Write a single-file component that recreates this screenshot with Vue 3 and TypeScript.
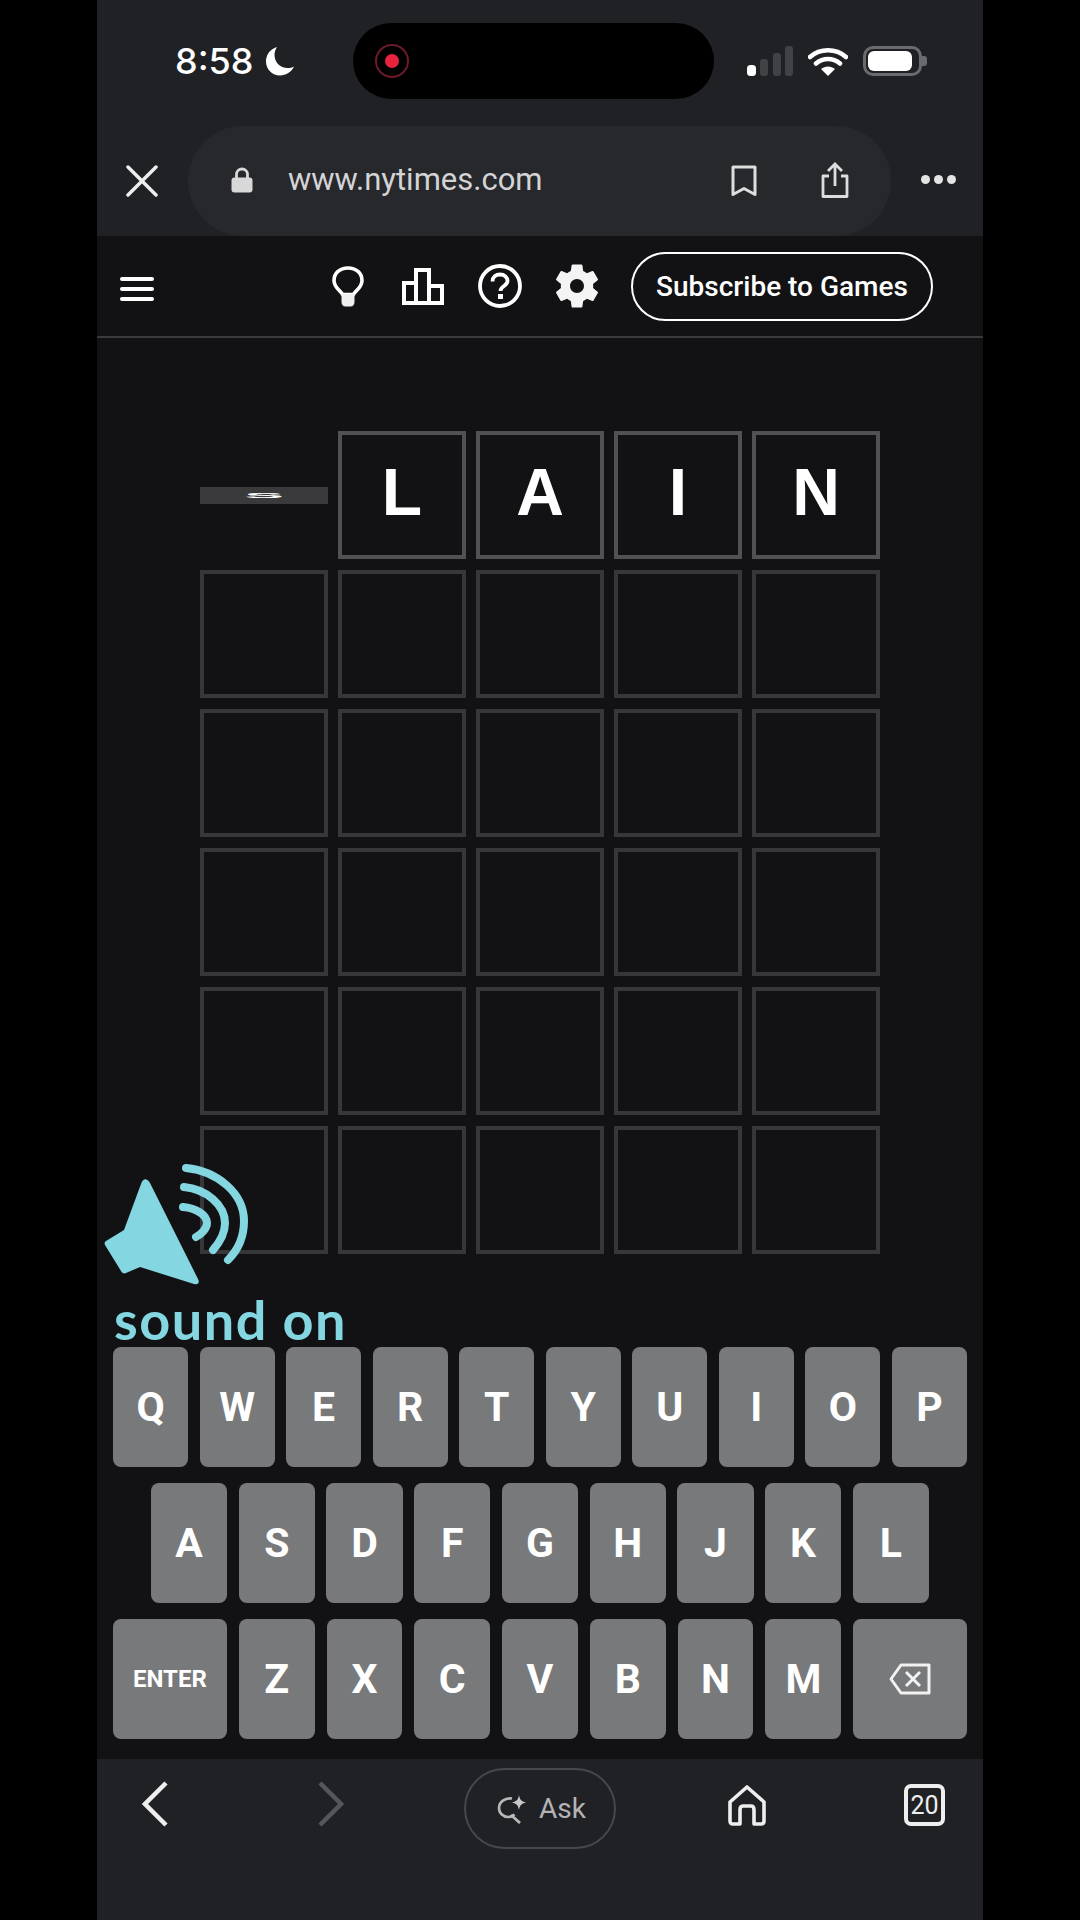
<script setup lang="ts">
const tiles: string[] = ['', 'L', 'A', 'I', 'N']
const emptyRows: number[] = [1, 2, 3, 4, 5]

const keyRows: string[][] = [
  ['Q', 'W', 'E', 'R', 'T', 'Y', 'U', 'I', 'O', 'P'],
  ['A', 'S', 'D', 'F', 'G', 'H', 'J', 'K', 'L'],
  ['ENTER', 'Z', 'X', 'C', 'V', 'B', 'N', 'M', 'BACK'],
]

function keyClass(key: string): string {
  if (key === 'ENTER') return 'key wide enter'
  if (key === 'BACK') return 'key wide'
  return 'key'
}
</script>

<template>
  <div class="page">
    <div class="phone">
      <div class="chrome">
        <div class="status">
          <span class="time">8:58</span>
          <svg class="moon" viewBox="0 0 30 30" width="30" height="30">
            <path d="M12 1C5 3 1 9 1 15.500C1 23.500 7.500 29.500 15 29.500C21 29.500 26.500 26 29 20.500C27 21.500 25 22 22.500 22C15 22 9.500 16 9.500 9C9.500 6 10.500 3.500 12 1Z" fill="#fff" />
          </svg>
          <div class="island">
            <div class="rec"><div class="rec-dot"></div></div>
          </div>
          <svg class="signal" viewBox="0 0 46 30" width="46" height="30">
            <rect x="0" y="19" width="9" height="11" rx="3.500" fill="#fff" />
            <rect x="13" y="13" width="8" height="17" rx="3" fill="#414245" />
            <rect x="26" y="7" width="8" height="23" rx="3" fill="#414245" />
            <rect x="38" y="0" width="8" height="30" rx="3" fill="#414245" />
          </svg>
          <svg class="wifi" viewBox="0 0 40 30" width="40" height="30">
            <path d="M2 11C12 2 28 2 38 11M8 17.500C15 11.500 25 11.500 32 17.500" fill="none" stroke="#fff" stroke-width="4.500" stroke-linecap="round" />
            <path d="M13 23C17 19.500 23 19.500 27 23L20 30Z" fill="#fff" />
          </svg>
          <div class="battery">
            <div class="battery-body"><div class="battery-fill"></div></div>
            <div class="battery-nub"></div>
          </div>
        </div>
        <div class="url-row">
          <svg class="close" viewBox="0 0 32 32" width="32" height="32">
            <path d="M2 2L30 30M30 2L2 30" stroke="#eee" stroke-width="3.500" stroke-linecap="round" />
          </svg>
          <div class="url-bar">
            <svg class="lock" viewBox="0 0 22 26" width="22" height="26">
              <path d="M5.500 12V7.500C5.500 4 8 2 11 2C14 2 16.500 4 16.500 7.500V12" fill="none" stroke="#d8d8d8" stroke-width="2.800" />
              <rect x="0.500" y="10.500" width="21" height="15" rx="3" fill="#d8d8d8" />
            </svg>
            <span class="url">www.nytimes.com</span>
            <svg class="bookmark" viewBox="0 0 26 32" width="26" height="32">
              <path d="M2 2H24V29.500L13 23.500L2 29.500Z" fill="none" stroke="#ddd" stroke-width="3" stroke-linejoin="round" />
            </svg>
            <svg class="share" viewBox="0 0 28 36" width="28" height="36">
              <path d="M8 14H2V34.500H26V14H20" fill="none" stroke="#ddd" stroke-width="2.800" stroke-linejoin="round" />
              <path d="M14 24V3M7 9L14 2L21 9" fill="none" stroke="#ddd" stroke-width="2.800" />
            </svg>
          </div>
          <div class="dots"><i></i><i></i><i></i></div>
        </div>
      </div>

      <header class="game-head">
        <div class="burger"><i></i><i></i><i></i></div>
        <svg class="bulb" viewBox="0 0 32 41" width="32" height="41">
          <path d="M10.500 28.500C8 24 2 21.500 2 14.500C2 7 8 2 16 2C24 2 30 7 30 14.500C30 21.500 24 24 21.500 28.500Z" fill="none" stroke="#fff" stroke-width="3.600" stroke-linejoin="round" />
          <path d="M9.500 28H22.500V36C22.500 38.500 21 40.500 18.500 40.500H13.500C11 40.500 9.500 38.500 9.500 36Z" fill="#eee" />
        </svg>
        <svg class="stats" viewBox="0 0 42 37" width="42" height="37">
          <path d="M2 15H14V35H2ZM14 2H27V35H14ZM27 18H40V35H27Z" fill="none" stroke="#fff" stroke-width="4" />
        </svg>
        <svg class="help" viewBox="0 0 44 44" width="44" height="44">
          <circle cx="22" cy="22" r="20" fill="none" stroke="#fff" stroke-width="3.800" />
          <path d="M14.500 17.500C14.500 13 18 10.500 22 10.500C26.500 10.500 29.500 13.500 29.500 17C29.500 22 22.500 22 22.500 27" fill="none" stroke="#fff" stroke-width="3.800" />
          <rect x="20" y="30" width="5" height="5" fill="#fff" />
        </svg>
        <svg class="gear" viewBox="0 0 24 24" width="54" height="54">
          <path d="M19.140 12.940c.04-.3.060-.61.060-.94 0-.32-.020-.64-.070-.94l2.030-1.580c.18-.14.230-.41.120-.61l-1.920-3.320c-.12-.22-.37-.29-.59-.22l-2.390.96c-.5-.38-1.030-.7-1.620-.94l-.36-2.540c-.04-.24-.24-.41-.48-.41h-3.840c-.24 0-.43.170-.47.410l-.36 2.540c-.59.240-1.130.57-1.620.94l-2.390-.96c-.22-.08-.47 0-.59.220L2.740 8.870c-.12.210-.08.470.12.610l2.030 1.580c-.05.3-.09.630-.09.940s.020.640.070.940l-2.030 1.580c-.18.140-.23.410-.12.610l1.920 3.320c.12.220.37.290.59.220l2.390-.96c.5.380 1.030.7 1.620.94l.36 2.540c.05.240.24.410.48.410h3.840c.24 0 .44-.170.47-.41l.36-2.540c.59-.240 1.130-.56 1.620-.94l2.390.96c.22.080.47 0 .59-.220l1.920-3.320c.12-.22.070-.47-.12-.61l-2.010-1.580zM12 15.100c-1.700 0-3.100-1.400-3.100-3.100s1.400-3.100 3.100-3.100 3.100 1.400 3.100 3.100-1.400 3.100-3.100 3.100z" fill="#f4f4f4" />
        </svg>
        <div class="subscribe">Subscribe to Games</div>
      </header>

      <main class="board">
        <div class="tile-row">
          <div v-for="(letter, i) in tiles" :key="i" class="cell">
            <div v-if="i === 0" class="tile-flip"><span class="flip-letter">S</span></div>
            <div v-else class="tile filled">{{ letter }}</div>
          </div>
        </div>
        <div v-for="row in emptyRows" :key="row" class="tile-row">
          <div v-for="col in 5" :key="col" class="cell">
            <div class="tile"></div>
          </div>
        </div>
      </main>

      <section class="keyboard">
        <div v-for="(row, r) in keyRows" :key="r" class="key-row" :class="'row-' + r">
          <div v-for="key in row" :key="key" :class="keyClass(key)">
            <svg v-if="key === 'BACK'" viewBox="0 0 42 32" width="42" height="32">
              <path d="M12 2H40V30H12L2 16Z" fill="none" stroke="#f2f2f2" stroke-width="3" stroke-linejoin="round" />
              <path d="M17 9L31 23M31 9L17 23" stroke="#f2f2f2" stroke-width="3" />
            </svg>
            <template v-else>{{ key }}</template>
          </div>
        </div>
      </section>

      <nav class="toolbar">
        <svg class="nav-back" viewBox="0 0 26 46" width="26" height="46">
          <path d="M24 2L3 23L24 44" fill="none" stroke="#eee" stroke-width="4.500" />
        </svg>
        <svg class="nav-fwd" viewBox="0 0 26 46" width="26" height="46">
          <path d="M2 2L23 23L2 44" fill="none" stroke="#55565a" stroke-width="4.500" />
        </svg>
        <div class="ask">
          <svg viewBox="0 0 30 30" width="30" height="30">
            <path d="M15 4.500C8 3.500 2 8 2 14C2 19.500 6.500 23 11 23C14 23 16 22 17.500 20.500" fill="none" stroke="#b8b8b8" stroke-width="2.600" />
            <path d="M14 21L23 29" stroke="#b8b8b8" stroke-width="2.800" />
            <path d="M22 1C23 6 24 7 29 8.500C24 10 23 11 22 16C21 11 20 10 15 8.500C20 7 21 6 22 1Z" fill="#c8c8c8" />
          </svg>
          <span>Ask</span>
        </div>
        <svg class="home" viewBox="0 0 38 41" width="38" height="41">
          <path d="M2 17L19 2L36 17V36C36 38 35 39 33 39H26V25C26 22 25 21 23 21H15C13 21 12 22 12 25V39H5C3 39 2 38 2 36Z" fill="none" stroke="#eee" stroke-width="3.600" stroke-linejoin="round" />
        </svg>
        <div class="tabs">20</div>
      </nav>

      <div class="sticker">
        <svg viewBox="0 0 150 122" width="150" height="122">
          <path d="M2 78L20 67L37 21C39 15 43 15 46 20L94 116C96 120 94 122 90 121L36 104L22 110C20 111 18 110 17 108L1 82C0 80 1 79 2 78Z" fill="#84d6e0" />
          <path d="M82 5C113 8 140 30 140 58C140 73 134 87 124 97" fill="none" stroke="#84d6e0" stroke-width="8" stroke-linecap="round" />
          <path d="M80 24C102 26 121 42 121 60C121 70 116 79 109 87" fill="none" stroke="#84d6e0" stroke-width="8" stroke-linecap="round" />
          <path d="M79 44C92 45 103 52 103 60C103 65 98 71 92 74" fill="none" stroke="#84d6e0" stroke-width="8" stroke-linecap="round" />
        </svg>
        <span class="sound-text">sound on</span>
      </div>
    </div>
  </div>
</template>

<style>
html,
body {
  margin: 0;
  background: #000;
}
</style>

<style scoped>
.page {
  width: 1080px;
  height: 1920px;
  background: #000;
  display: flex;
  justify-content: center;
  font-family: "Liberation Sans", Arial, sans-serif;
  overflow: hidden;
}
.phone {
  position: relative;
  width: 886px;
  height: 1920px;
  background: #121214;
  display: flex;
  flex-direction: column;
}

/* browser chrome */
.chrome {
  height: 236px;
  background: #202125;
  flex: none;
}
.status {
  height: 122px;
  padding-left: 78px;
  display: flex;
  align-items: center;
  box-sizing: border-box;
}
.time {
  width: 88px;
  color: #fff;
  font: 500 36px Inter, sans-serif;
}
.moon {
  margin-left: 2px;
  flex: none;
}
.island {
  margin-left: 58px;
  width: 361px;
  height: 76px;
  border-radius: 38px;
  background: #000;
  display: flex;
  align-items: center;
  padding-left: 22px;
  box-sizing: border-box;
  flex: none;
}
.rec {
  width: 34px;
  height: 34px;
  border: 2px solid #6b1a28;
  border-radius: 50%;
  box-sizing: border-box;
  display: flex;
  align-items: center;
  justify-content: center;
}
.rec-dot {
  width: 14px;
  height: 14px;
  border-radius: 50%;
  background: #e8243f;
}
.signal {
  margin-left: 33px;
  flex: none;
}
.wifi {
  margin-left: 15px;
  flex: none;
}
.battery {
  margin-left: 15px;
  display: flex;
  align-items: center;
}
.battery-body {
  width: 59px;
  height: 30px;
  border: 3px solid #6a6b6f;
  border-radius: 10px;
  box-sizing: border-box;
  padding: 2px;
}
.battery-fill {
  width: 44px;
  height: 100%;
  background: #fff;
  border-radius: 6px;
}
.battery-nub {
  width: 5px;
  height: 10px;
  background: #6a6b6f;
  border-radius: 0 3px 3px 0;
}
.url-row {
  height: 114px;
  display: flex;
  align-items: flex-end;
  padding-left: 29px;
}
.close {
  margin-bottom: 39px;
  flex: none;
}
.url-bar {
  margin-left: 30px;
  width: 703px;
  height: 110px;
  border-radius: 55px;
  background: #27282c;
  display: flex;
  align-items: center;
  padding-left: 43px;
  box-sizing: border-box;
  flex: none;
}
.lock {
  margin-top: -2px;
  flex: none;
}
.url {
  margin-left: 35px;
  margin-top: -3px;
  width: 443px;
  color: #d4d4d6;
  font: 400 31px Roboto, sans-serif;
}
.bookmark {
  flex: none;
}
.share {
  margin-left: 64px;
  margin-top: -2px;
  flex: none;
}
.dots {
  margin-left: 30px;
  margin-bottom: 52px;
  display: flex;
  gap: 4px;
}
.dots i {
  width: 9px;
  height: 9px;
  border-radius: 50%;
  background: #e4e4e4;
}

/* game header */
.game-head {
  height: 102px;
  border-bottom: 2px solid #3a3a3c;
  box-sizing: border-box;
  display: flex;
  align-items: center;
  padding-left: 23px;
  flex: none;
}
.burger {
  width: 34px;
  margin-top: 6px;
  display: flex;
  flex-direction: column;
  gap: 6px;
}
.burger i {
  height: 4px;
  background: #fff;
  border-radius: 2px;
}
.bulb {
  margin-left: 178px;
  flex: none;
}
.stats {
  margin-left: 38px;
  flex: none;
}
.help {
  margin-left: 34px;
  flex: none;
}
.gear {
  margin-left: 28px;
  flex: none;
}
.subscribe {
  margin-left: 27px;
  width: 302px;
  height: 69px;
  border: 2px solid #fff;
  border-radius: 35px;
  box-sizing: border-box;
  color: #fff;
  font: 500 28px Roboto, sans-serif;
  display: flex;
  align-items: center;
  justify-content: center;
  flex: none;
}

/* board */
.board {
  padding: 93px 0 0 103px;
  display: flex;
  flex-direction: column;
  gap: 11px;
  flex: none;
}
.tile-row {
  display: flex;
  gap: 10px;
}
.cell {
  width: 128px;
  height: 128px;
  display: flex;
  align-items: center;
  justify-content: center;
}
.tile {
  width: 128px;
  height: 128px;
  border: 4px solid #37373a;
  box-sizing: border-box;
  color: #fff;
  font-size: 66px;
  font-weight: 700;
  display: flex;
  align-items: center;
  justify-content: center;
}
.tile.filled {
  border-color: #505153;
  padding-bottom: 6px;
}
.tile-flip {
  width: 128px;
  height: 17px;
  background: #3a3a3c;
  display: flex;
  align-items: center;
  justify-content: center;
}
.flip-letter {
  color: #fff;
  font-size: 66px;
  font-weight: 700;
  line-height: 1;
  transform: scale(0.9, 0.12);
}

/* keyboard */
.keyboard {
  padding-top: 93px;
  height: 505px;
  box-sizing: border-box;
  display: flex;
  flex-direction: column;
  gap: 16px;
  align-items: center;
  flex: none;
}
.key-row {
  display: flex;
  height: 120px;
}
.row-0 {
  width: 854px;
  gap: 11.500px;
}
.row-1 {
  width: 778px;
  gap: 11.500px;
}
.row-2 {
  width: 854px;
  gap: 12px;
}
.key {
  flex: 1 1 0;
  background: #78797a;
  border-radius: 8px;
  color: #fff;
  font: 700 41px Roboto, sans-serif;
  display: flex;
  align-items: center;
  justify-content: center;
}
.key.wide {
  flex: 1.500 1 0;
}
.key.enter {
  font-size: 24px;
}

/* browser toolbar */
.toolbar {
  flex: 1;
  background: #202125;
  position: relative;
  display: flex;
  align-items: flex-start;
  padding: 9px 0 0 45px;
  box-sizing: border-box;
}
.nav-back {
  margin-top: 13px;
  flex: none;
}
.nav-fwd {
  margin-left: 150px;
  margin-top: 13px;
  flex: none;
}
.ask {
  margin-left: 120px;
  width: 152px;
  height: 81px;
  border: 2px solid #46474b;
  border-radius: 41px;
  box-sizing: border-box;
  padding-left: 3px;
  display: flex;
  align-items: center;
  justify-content: center;
  gap: 12px;
  color: #b4b4b6;
  font: 400 28px Roboto, sans-serif;
  flex: none;
}
.home {
  margin-left: 112px;
  margin-top: 17px;
  flex: none;
}
.tabs {
  margin-left: 138px;
  margin-top: 16px;
  width: 41px;
  height: 42px;
  border: 4px solid #eee;
  border-radius: 7px;
  box-sizing: border-box;
  color: #eee;
  font: 400 25px Roboto, sans-serif;
  display: flex;
  align-items: center;
  justify-content: center;
  flex: none;
}

/* sound overlay */
.sticker {
  position: absolute;
  left: 7px;
  top: 1163px;
  display: flex;
  flex-direction: column;
}
.sticker svg {
  display: block;
}
.sound-text {
  position: absolute;
  left: 10px;
  top: 127px;
  color: #84d6e0;
  font: 700 54px Lato, sans-serif;
  letter-spacing: 1.500px;
  line-height: 60px;
  white-space: nowrap;
}
</style>
